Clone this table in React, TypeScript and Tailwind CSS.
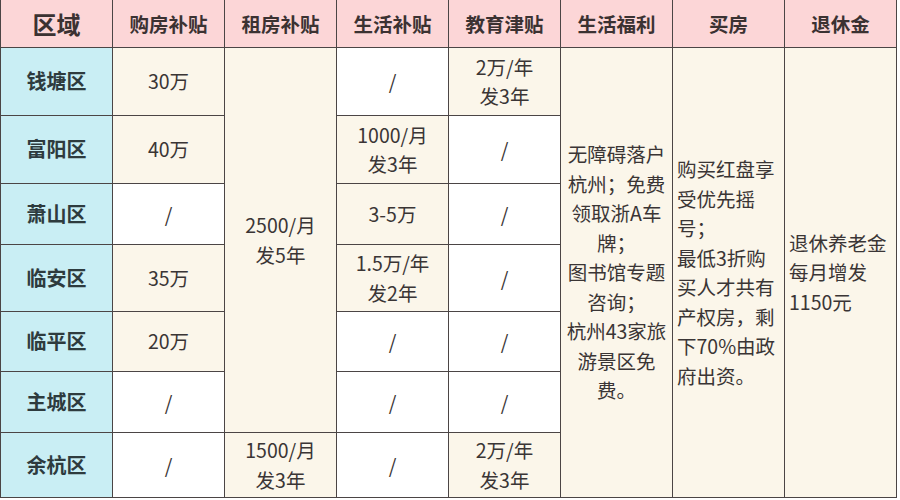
import React from "react";

const B = "border border-[#4b4545]";
const cream = "bg-[#fbf6ea]";
const white = "bg-white";

function Lines({ lines, align = "center" }: { lines: string[]; align?: "center" | "left" }) {
  return (
    <div className={align === "center" ? "flex flex-col items-center" : "flex flex-col items-start"}>
      {lines.map((l, i) => (
        <div key={i} className="whitespace-nowrap">
          {l}
        </div>
      ))}
    </div>
  );
}

function Td({
  bg,
  children,
  rowSpan,
  className = "",
}: {
  bg: string;
  children?: React.ReactNode;
  rowSpan?: number;
  className?: string;
}) {
  return (
    <td rowSpan={rowSpan} className={`${B} ${bg} text-center align-middle p-0 ${className}`}>
      {children}
    </td>
  );
}

function Area({ name }: { name: string }) {
  return (
    <td className={`${B} bg-[#c9eef4] text-center align-middle p-0 font-bold text-[20px] text-[#2e3b3e]`}>
      {name}
    </td>
  );
}

export default function App() {
  const heads = ["购房补贴", "租房补贴", "生活补贴", "教育津贴", "生活福利", "买房", "退休金"];
  return (
    <div
      className="w-[900px] h-[500px] bg-white overflow-hidden text-[#3a3535]"
      style={{ fontFamily: '"Noto Sans CJK SC", "Noto Sans", sans-serif' }}
    >
      <table className="border-collapse table-fixed w-[897px] text-[19.5px] leading-[29.5px]">
        <colgroup>
          {Array.from({ length: 8 }).map((_, i) => (
            <col key={i} className="w-[112px]" />
          ))}
        </colgroup>
        <tbody>
          <tr className="h-[47px]">
            <td className={`${B} border-t-0 bg-[#fcd6d7] text-center align-middle p-0 font-bold text-[24px] text-[#3b3232]`}>
              区域
            </td>
            {heads.map((h) => (
              <td
                key={h}
                className={`${B} border-t-0 bg-[#fcd6d7] text-center align-middle p-0 font-bold text-[19.5px] text-[#3b3232]`}
              >
                {h}
              </td>
            ))}
          </tr>
          <tr className="h-[68px]">
            <Area name="钱塘区" />
            <Td bg={cream}>30万</Td>
            <Td bg={cream} rowSpan={6}>
              <Lines lines={["2500/月", "发5年"]} />
            </Td>
            <Td bg={white}>/</Td>
            <Td bg={cream}>
              <Lines lines={["2万/年", "发3年"]} />
            </Td>
            <Td bg={cream} rowSpan={7}>
              <Lines
                lines={[
                  "无障碍落户",
                  "杭州；免费",
                  "领取浙A车",
                  "牌；",
                  "图书馆专题",
                  "咨询；",
                  "杭州43家旅",
                  "游景区免",
                  "费。",
                ]}
              />
            </Td>
            <Td bg={cream} rowSpan={7} className="text-left pl-[4px]">
              <Lines
                align="left"
                lines={[
                  "购买红盘享",
                  "受优先摇",
                  "号；",
                  "最低3折购",
                  "买人才共有",
                  "产权房，剩",
                  "下70%由政",
                  "府出资。",
                ]}
              />
            </Td>
            <Td bg={cream} rowSpan={7} className="text-left pl-[4px]">
              <Lines align="left" lines={["退休养老金", "每月增发", "1150元"]} />
            </Td>
          </tr>
          <tr className="h-[68px]">
            <Area name="富阳区" />
            <Td bg={cream}>40万</Td>
            <Td bg={cream}>
              <Lines lines={["1000/月", "发3年"]} />
            </Td>
            <Td bg={white}>/</Td>
          </tr>
          <tr className="h-[61px]">
            <Area name="萧山区" />
            <Td bg={white}>/</Td>
            <Td bg={cream}>3-5万</Td>
            <Td bg={white}>/</Td>
          </tr>
          <tr className="h-[67px]">
            <Area name="临安区" />
            <Td bg={cream}>35万</Td>
            <Td bg={cream}>
              <Lines lines={["1.5万/年", "发2年"]} />
            </Td>
            <Td bg={white}>/</Td>
          </tr>
          <tr className="h-[60px]">
            <Area name="临平区" />
            <Td bg={cream}>20万</Td>
            <Td bg={white}>/</Td>
            <Td bg={white}>/</Td>
          </tr>
          <tr className="h-[61px]">
            <Area name="主城区" />
            <Td bg={white}>/</Td>
            <Td bg={white}>/</Td>
            <Td bg={white}>/</Td>
          </tr>
          <tr className="h-[65px]">
            <Area name="余杭区" />
            <Td bg={white}>/</Td>
            <Td bg={cream}>
              <Lines lines={["1500/月", "发3年"]} />
            </Td>
            <Td bg={white}>/</Td>
            <Td bg={cream}>
              <Lines lines={["2万/年", "发3年"]} />
            </Td>
          </tr>
        </tbody>
      </table>
    </div>
  );
}
